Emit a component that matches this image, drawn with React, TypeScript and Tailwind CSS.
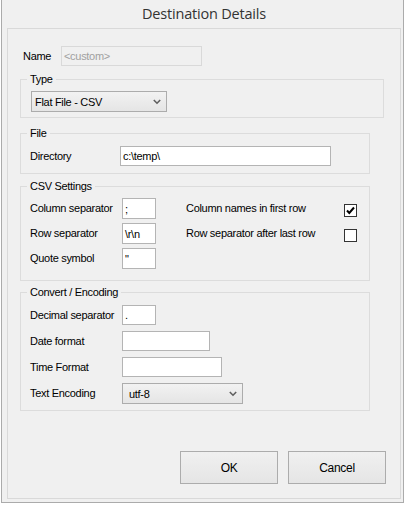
import React from "react";

function Group({ label, className, children }: { label: string; className: string; children: React.ReactNode }) {
  return (
    <div className={"relative border border-[#dcdcdc] " + className}>
      <span className="absolute left-[6px] top-[-8px] px-[3px] bg-[#f0f0f0] leading-[14px] whitespace-nowrap">{label}</span>
      {children}
    </div>
  );
}

function TextBox({ value, className }: { value?: string; className: string }) {
  return (
    <div className={"border border-[#b4b4b4] bg-white flex items-center pl-[2px] leading-[14px] " + className}>
      {value}
    </div>
  );
}

function Chevron() {
  return (
    <svg width="8" height="6" viewBox="0 0 8 6" className="mr-[5px]">
      <polyline points="0.8,1 4,4.2 7.2,1" fill="none" stroke="#5f5f5f" strokeWidth="1.6" />
    </svg>
  );
}

function Select({ value, className }: { value: string; className: string }) {
  return (
    <div className={"border border-[#acacac] bg-gradient-to-b from-[#f2f2f2] to-[#e5e5e5] flex items-center justify-between pl-[3px] leading-[14px] " + className}>
      <span>{value}</span>
      <Chevron />
    </div>
  );
}

function CheckBox({ checked }: { checked: boolean }) {
  return (
    <div className="self-start mt-[6px] w-[13px] h-[13px] border border-[#333333] bg-white flex items-center justify-center">
      {checked && (
        <svg width="11" height="11" viewBox="0 0 11 11">
          <polyline points="2,5.5 4.3,8 9,2.5" fill="none" stroke="#000" strokeWidth="2" />
        </svg>
      )}
    </div>
  );
}

function Button({ label }: { label: string }) {
  return (
    <div className="w-[98px] h-[33px] border border-[#acacac] bg-gradient-to-b from-[#f0f0f0] to-[#e5e5e5] flex items-center justify-center text-[12px]">
      {label}
    </div>
  );
}

export default function App() {
  return (
    <div className="w-[407px] h-[507px] bg-white font-['Liberation_Sans',Arial,sans-serif] text-[11px] tracking-[-0.3px] text-black">
      <div className="ml-[1px] w-[403px] h-[503px] border-x border-b border-[#ababab] bg-[#f0f0f0] flex flex-col">
        <div className="h-[28px] flex items-center justify-center font-['Open_Sans',sans-serif] text-[14.5px] tracking-[-0.2px] text-[#333333] pl-[3px]">
          Destination Details
        </div>
        <div className="ml-[5px] w-[394px] mb-[3px] flex-1 border border-[#d9d9d9] flex flex-col pt-[17px]">
          <div className="flex items-center h-[20px] pl-[15px]">
            <span className="w-[38px]">Name</span>
            <div className="w-[141px] h-[20px] border border-[#d9d9d9] bg-[#f0f0f0] flex items-center pl-[2px] text-[#a0a0a0]">
              &lt;custom&gt;
            </div>
          </div>

          <Group label="Type" className="mt-[13px] ml-[12px] w-[364px] pt-[11px] pl-[10px] pb-[5px]">
            <Select value="Flat File - CSV" className="w-[136px] h-[21px]" />
          </Group>

          <Group label="File" className="mt-[15px] ml-[12px] w-[350px] pt-[12px] pl-[9px] pb-[7px]">
            <div className="flex items-center">
              <span className="w-[90px]">Directory</span>
              <TextBox value="c:\temp\" className="w-[211px] h-[20px]" />
            </div>
          </Group>

          <Group label="CSV Settings" className="mt-[12px] ml-[12px] w-[350px] pt-[11px] pl-[9px] pb-[11px]">
            <div className="flex flex-col gap-[4px]">
              <div className="flex items-center h-[21px]">
                <span className="w-[92px]">Column separator</span>
                <TextBox value=";" className="w-[34px] h-[21px]" />
                <span className="ml-[30px] w-[158px]">Column names in first row</span>
                <CheckBox checked={true} />
              </div>
              <div className="flex items-center h-[21px]">
                <span className="w-[92px]">Row separator</span>
                <TextBox value="\r\n" className="w-[34px] h-[21px]" />
                <span className="ml-[30px] w-[158px]">Row separator after last row</span>
                <CheckBox checked={false} />
              </div>
              <div className="flex items-center h-[21px]">
                <span className="w-[92px]">Quote symbol</span>
                <TextBox value={'"'} className="w-[34px] h-[21px]" />
              </div>
            </div>
          </Group>

          <Group label="Convert / Encoding" className="mt-[11px] ml-[12px] w-[350px] pt-[12px] pl-[9px] pb-[6px]">
            <div className="flex flex-col gap-[6px]">
              <div className="flex items-center h-[20px]">
                <span className="w-[92px]">Decimal separator</span>
                <TextBox value="." className="w-[34px] h-[20px]" />
              </div>
              <div className="flex items-center h-[20px]">
                <span className="w-[92px]">Date format</span>
                <TextBox className="w-[88px] h-[20px]" />
              </div>
              <div className="flex items-center h-[20px]">
                <span className="w-[92px]">Time Format</span>
                <TextBox className="w-[100px] h-[20px]" />
              </div>
              <div className="flex items-center h-[21px]">
                <span className="w-[92px]">Text Encoding</span>
                <Select value="utf-8" className="w-[121px] h-[21px] pl-[6px]" />
              </div>
            </div>
          </Group>

          <div className="mt-auto flex justify-end gap-[10px] pr-[14px] pb-[14px]">
            <Button label="OK" />
            <Button label="Cancel" />
          </div>
        </div>
      </div>
    </div>
  );
}
